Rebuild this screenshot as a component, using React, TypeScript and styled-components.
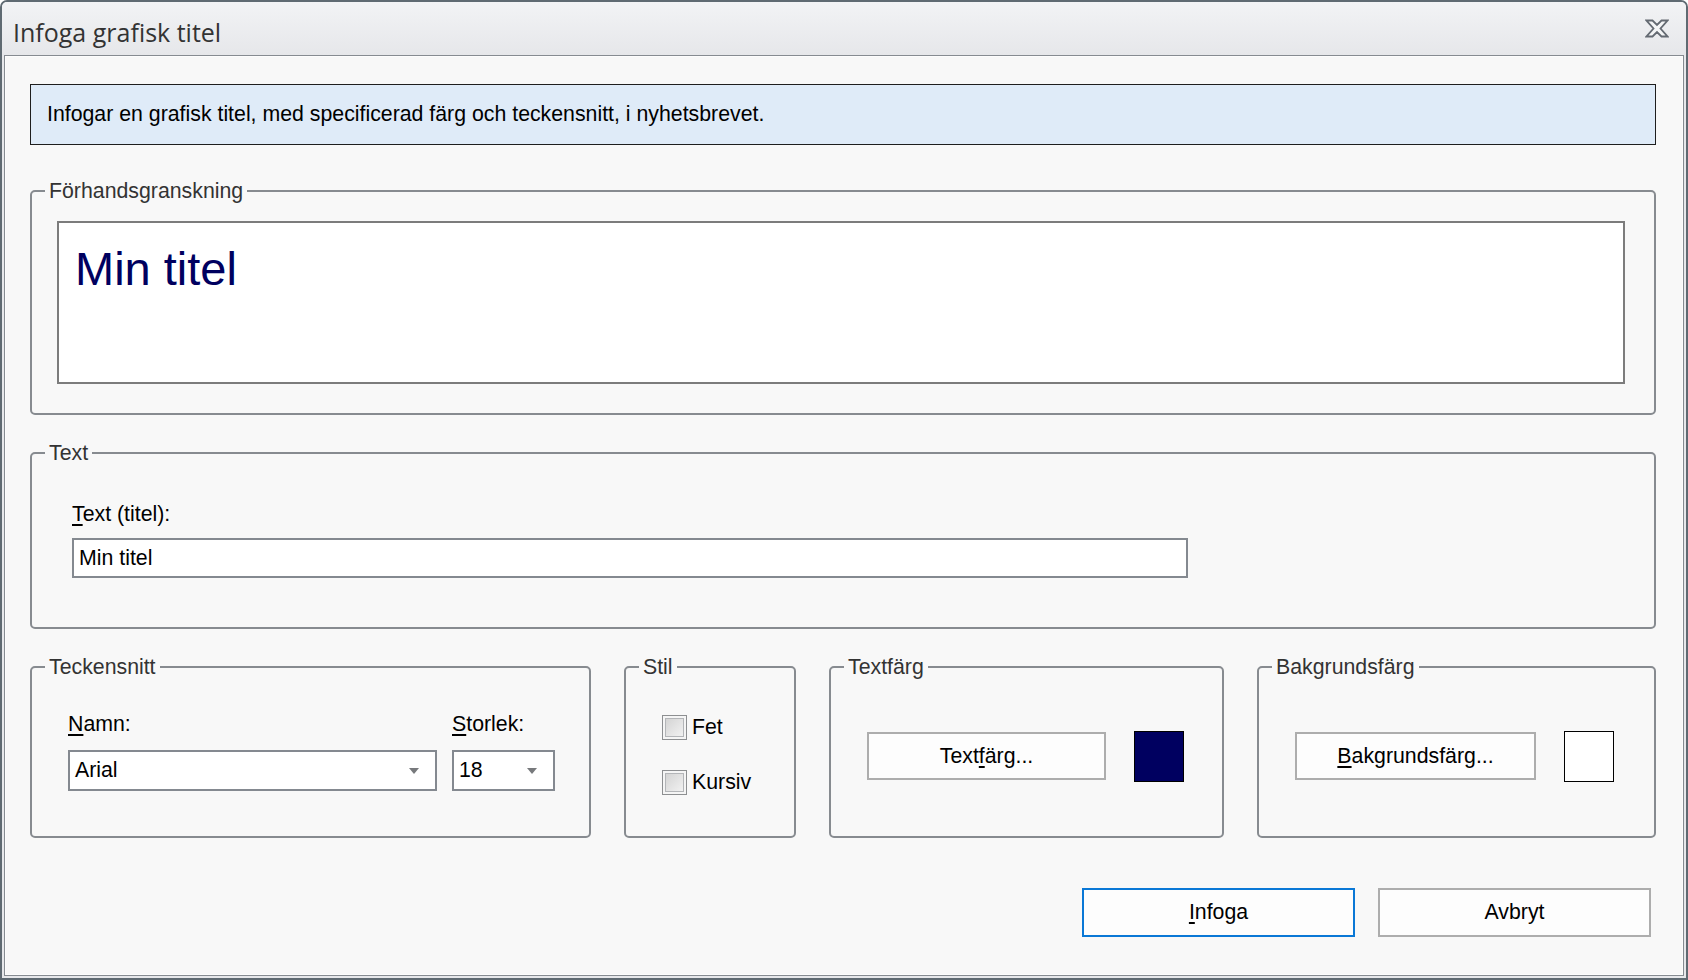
import React from 'react'
import styled, { createGlobalStyle } from 'styled-components'

const UI_FONT = '"Liberation Sans", Arial, sans-serif'

const GlobalStyle = createGlobalStyle`
  html, body {
    margin: 0;
    padding: 0;
    width: 100%;
    height: 100%;
    overflow: hidden;
    background: #ffffff;
  }
  #root {
    height: 100%;
  }
  * {
    box-sizing: border-box;
  }
`

export default function App() {
  return (
    <>
      <GlobalStyle />
      <Window>
        <TitleBar>
          <TitleText>Infoga grafisk titel</TitleText>
          <CloseButton aria-label="Stäng">
            <svg width="24" height="19" viewBox="0 0 24 19">
              <polygon
                points="1.5,1.5 7.5,1.5 12,6 16.5,1.5 22.5,1.5 15.5,9.5 22.5,17.5 16.5,17.5 12,13 7.5,17.5 1.5,17.5 8.5,9.5"
                fill="#f4f5f6"
                stroke="#646a72"
                strokeWidth="1.8"
                strokeLinejoin="miter"
              />
            </svg>
          </CloseButton>
        </TitleBar>

        <Content>
          <InfoBox>Infogar en grafisk titel, med specificerad färg och teckensnitt, i nyhetsbrevet.</InfoBox>

          <PreviewGroup>
            <Legend>Förhandsgranskning</Legend>
            <Preview>
              <PreviewTitle>Min titel</PreviewTitle>
            </Preview>
          </PreviewGroup>

          <TextGroup>
            <Legend>Text</Legend>
            <Label>
              <Mnemonic>T</Mnemonic>ext (titel):
            </Label>
            <TextInput defaultValue="Min titel" />
          </TextGroup>

          <OptionsRow>
            <FontGroup>
              <Legend>Teckensnitt</Legend>
              <FieldColumn>
                <Label>
                  <Mnemonic>N</Mnemonic>amn:
                </Label>
                <Combo $width={369}>
                  <span>Arial</span>
                  <ComboArrow />
                </Combo>
              </FieldColumn>
              <FieldColumn>
                <Label>
                  <Mnemonic>S</Mnemonic>torlek:
                </Label>
                <Combo $width={103}>
                  <span>18</span>
                  <ComboArrow />
                </Combo>
              </FieldColumn>
            </FontGroup>

            <StyleGroup>
              <Legend>Stil</Legend>
              <CheckRow>
                <CheckBox />
                Fet
              </CheckRow>
              <CheckRow>
                <CheckBox />
                Kursiv
              </CheckRow>
            </StyleGroup>

            <ColorGroup>
              <Legend>Textfärg</Legend>
              <DialogButton $width={239} $height={48}>
                Text<Mnemonic>f</Mnemonic>ärg...
              </DialogButton>
              <Swatch $color="#000060" />
            </ColorGroup>

            <ColorGroup>
              <Legend>Bakgrundsfärg</Legend>
              <DialogButton $width={241} $height={48}>
                <Mnemonic>B</Mnemonic>akgrundsfärg...
              </DialogButton>
              <Swatch $color="#ffffff" />
            </ColorGroup>
          </OptionsRow>

          <ButtonRow>
            <DialogButton $width={273} $height={49} $primary>
              <Mnemonic>I</Mnemonic>nfoga
            </DialogButton>
            <DialogButton $width={273} $height={49}>
              Avbryt
            </DialogButton>
          </ButtonRow>
        </Content>
      </Window>
    </>
  )
}

const Window = styled.div`
  width: 100vw;
  height: 100vh;
  display: flex;
  flex-direction: column;
  border: 2px solid #5f6a72;
  border-radius: 7px 7px 0 0;
  background: #e7e8eb;
  overflow: hidden;
  font-family: ${UI_FONT};
  font-size: 21.3px;
  color: #000;
`

const TitleBar = styled.div`
  flex: none;
  height: 53px;
  display: flex;
  align-items: center;
  justify-content: space-between;
  padding: 0 17px 0 11px;
  background: linear-gradient(#f2f3f5, #e6e7ea);
`

const TitleText = styled.div`
  margin-top: 7px;
  font-family: 'Open Sans', 'Noto Sans', sans-serif;
  font-size: 25px;
  color: #333;
`

const CloseButton = styled.div`
  display: flex;
`

const Content = styled.div`
  flex: 1;
  margin: 0 2px 2px;
  border: 1px solid #868b91;
  box-shadow: inset 0 0 0 1px #fdfdfd;
  background: #f8f8f8;
  padding: 28px 27px 0 25px;
  display: flex;
  flex-direction: column;
`

const InfoBox = styled.div`
  height: 61px;
  display: flex;
  align-items: center;
  padding-left: 16px;
  border: 1px solid #1e1e1e;
  background: #dfebf8;
`

const GroupBox = styled.div`
  position: relative;
  border: 2px solid #878b90;
  border-radius: 5px;
`

const Legend = styled.span`
  position: absolute;
  top: -16px;
  left: 13px;
  padding: 0 4px;
  line-height: 30px;
  background: #f8f8f8;
  color: #333;
  white-space: nowrap;
`

const PreviewGroup = styled(GroupBox)`
  margin-top: 45px;
  height: 225px;
  padding: 29px 29px 29px 25px;
  display: flex;
`

const Preview = styled.div`
  flex: 1;
  border: 2px solid #7c7c7c;
  background: #ffffff;
  padding: 22px 0 0 16px;
`

const PreviewTitle = styled.div`
  font-family: 'Liberation Sans', Arial, sans-serif;
  font-size: 47px;
  line-height: 47px;
  color: #00005f;
`

const TextGroup = styled(GroupBox)`
  margin-top: 37px;
  height: 177px;
  padding: 45px 0 0 40px;
`

const Label = styled.div`
  line-height: 30px;
  white-space: nowrap;
`

const Mnemonic = styled.span`
  text-decoration: underline;
  text-underline-offset: 3px;
  text-decoration-thickness: 1.5px;
`

const TextInput = styled.input`
  display: block;
  margin-top: 9px;
  width: 1116px;
  height: 40px;
  border: 2px solid #848990;
  background: #ffffff;
  padding: 0 5px;
  font-family: ${UI_FONT};
  font-size: 21.3px;
  color: #000;
  outline: none;
`

const OptionsRow = styled.div`
  margin-top: 37px;
  display: grid;
  grid-template-columns: 561px 172px 395px 1fr;
  column-gap: 33px;
  height: 172px;
`

const FontGroup = styled(GroupBox)`
  padding: 41px 0 0 36px;
  display: flex;
  gap: 15px;
`

const FieldColumn = styled.div`
  display: flex;
  flex-direction: column;
  gap: 11px;
`

const Combo = styled.div<{ $width: number }>`
  width: ${p => p.$width}px;
  height: 41px;
  border: 2px solid #848990;
  background: #ffffff;
  display: flex;
  align-items: center;
  justify-content: space-between;
  padding: 0 16px 0 5px;
`

const ComboArrow = styled.span`
  width: 0;
  height: 0;
  border-left: 5px solid transparent;
  border-right: 5px solid transparent;
  border-top: 6px solid #77797c;
`

const StyleGroup = styled(GroupBox)`
  padding: 44px 0 0 36px;
  display: flex;
  flex-direction: column;
  gap: 25px;
`

const CheckRow = styled.div`
  display: flex;
  align-items: center;
  gap: 5px;
  height: 30px;
`

const CheckBox = styled.span`
  flex: none;
  width: 25px;
  height: 25px;
  display: flex;
  padding: 2px;
  border: 1px solid #8d8f91;
  background: #f5f5f5;

  &::after {
    content: '';
    flex: 1;
    border: 1px solid #b3b5b8;
    background: linear-gradient(135deg, #d4d4d4, #f1f1f1);
  }
`

const ColorGroup = styled(GroupBox)`
  padding: 63px 0 0 36px;
  display: flex;
  align-items: flex-start;
  gap: 28px;
`

const DialogButton = styled.div<{ $width: number; $height: number; $primary?: boolean }>`
  flex: none;
  width: ${p => p.$width}px;
  height: ${p => p.$height}px;
  margin-top: 1px;
  display: flex;
  align-items: center;
  justify-content: center;
  border: 2px solid ${p => (p.$primary ? '#0a78d6' : '#adadad')};
  background: #fdfdfd;
  white-space: nowrap;
  cursor: default;
`

const Swatch = styled.div<{ $color: string }>`
  flex: none;
  width: 50px;
  height: 51px;
  border: 1px solid #000;
  background: ${p => p.$color};
`

const ButtonRow = styled.div`
  margin-top: 49px;
  padding-right: 5px;
  display: flex;
  justify-content: flex-end;
  gap: 23px;
`
